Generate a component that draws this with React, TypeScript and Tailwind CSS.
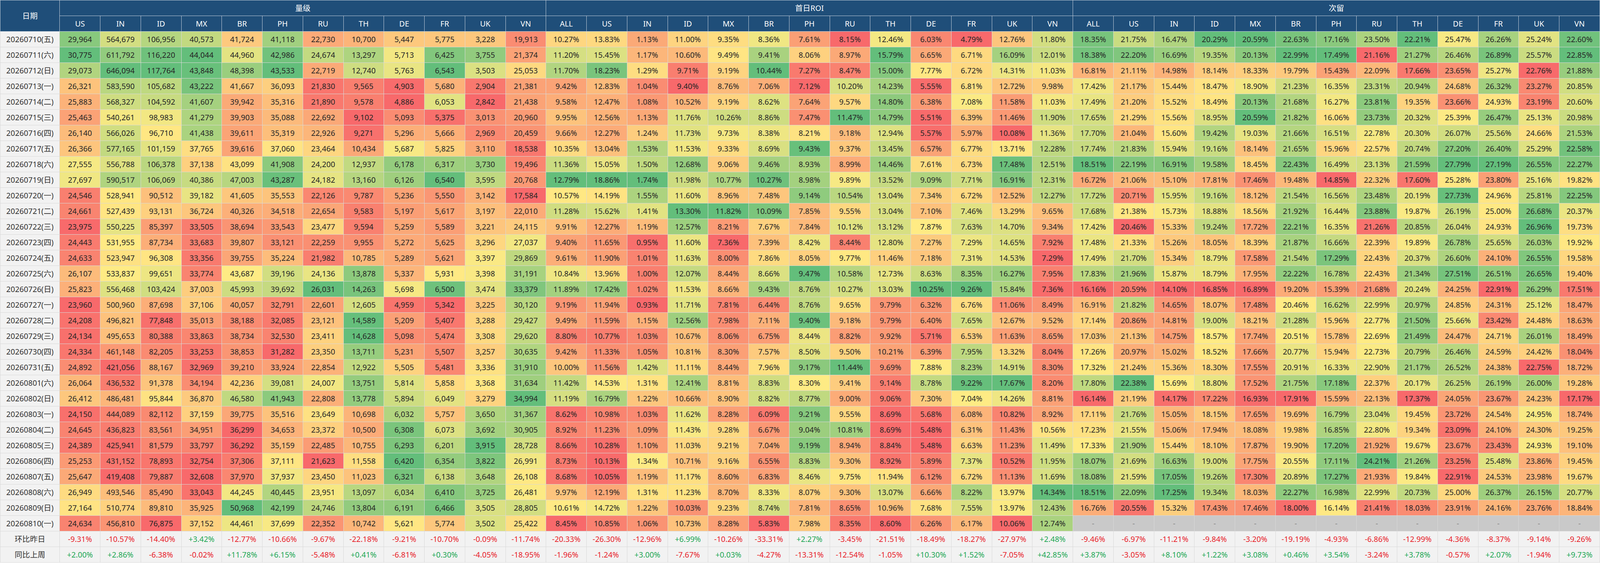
import React from "react";

const COUNTRIES = ["US", "IN", "ID", "MX", "BR", "PH", "RU", "TH", "DE", "FR", "UK", "VN"];
const COUNTRIES_ALL = ["ALL", ...COUNTRIES];

const VOLUME = `29,964 564,679 106,956 40,573 41,724 41,118 22,730 10,700 5,447 5,775 3,228 19,913
30,775 611,792 116,220 44,044 44,960 42,986 24,674 13,297 5,713 6,425 3,755 21,374
29,073 646,094 117,764 43,848 48,398 43,533 22,719 12,740 5,763 6,543 3,503 25,053
26,321 583,590 105,682 43,222 41,667 36,093 21,830 9,565 4,903 5,680 2,904 21,381
25,883 568,327 104,592 41,607 39,942 35,316 21,890 9,578 4,886 6,053 2,842 21,438
25,463 540,261 98,983 41,279 39,903 35,088 22,692 9,102 5,093 5,375 3,013 20,960
26,140 566,026 96,710 41,438 39,611 35,319 22,926 9,271 5,296 5,666 2,969 20,459
26,366 577,165 101,159 37,765 39,616 37,060 23,464 10,434 5,687 5,825 3,110 18,538
27,555 556,788 106,378 37,138 43,099 41,908 24,200 12,937 6,178 6,317 3,730 19,496
27,697 590,517 106,069 40,386 47,003 43,287 24,182 13,160 6,126 6,540 3,595 20,768
24,546 528,941 90,512 39,182 41,605 35,553 22,126 9,787 5,236 5,550 3,142 17,584
24,661 527,439 93,131 36,724 40,326 34,518 22,654 9,583 5,197 5,617 3,197 22,010
23,975 550,225 85,397 33,505 38,694 33,543 23,477 9,594 5,259 5,589 3,221 24,115
24,443 531,955 87,734 33,683 39,807 33,121 22,259 9,955 5,272 5,625 3,296 27,037
24,633 523,947 96,308 33,356 39,755 35,224 21,982 10,785 5,289 5,621 3,397 29,869
26,107 533,837 99,651 33,774 43,687 39,196 24,136 13,878 5,337 5,931 3,398 31,191
25,823 556,468 103,424 37,003 45,993 39,692 26,031 14,263 5,698 6,500 3,474 33,379
23,960 500,960 87,698 37,106 40,057 32,791 22,601 12,605 4,959 5,342 3,225 30,120
24,208 496,821 77,848 35,013 38,188 32,085 23,121 14,589 5,209 5,407 3,288 29,427
24,134 495,653 80,388 33,863 38,734 32,530 23,411 14,628 5,098 5,474 3,308 29,620
24,334 461,148 82,205 33,253 38,853 31,282 23,350 13,711 5,231 5,507 3,257 30,635
24,892 421,056 88,167 32,969 39,210 33,924 22,854 12,922 5,505 5,481 3,336 31,910
26,064 436,532 91,378 34,194 42,236 39,081 24,007 13,751 5,814 5,858 3,368 31,634
26,412 486,481 95,844 36,870 46,580 41,943 22,808 13,778 5,894 6,049 3,279 34,994
24,150 444,089 82,112 37,159 39,775 35,516 23,649 10,698 6,032 5,757 3,650 31,367
24,645 436,823 83,561 34,951 36,299 34,653 23,372 10,500 6,308 6,073 3,692 30,905
24,389 425,941 81,579 33,797 36,292 35,159 22,485 10,755 6,293 6,201 3,915 28,728
25,253 431,152 78,893 32,754 37,306 37,111 21,623 11,558 6,420 6,354 3,822 26,991
25,647 419,408 79,887 32,608 37,970 37,937 23,450 11,023 6,321 6,138 3,648 26,108
26,949 493,546 85,490 33,043 44,245 40,445 23,951 13,097 6,034 6,410 3,725 26,481
27,164 510,774 89,810 35,925 50,968 42,199 24,746 13,804 6,191 6,466 3,505 28,805
24,634 456,810 76,875 37,152 44,461 37,699 22,352 10,742 5,621 5,774 3,502 25,422`;

const ROI = `10.27% 13.83% 1.13% 11.00% 9.35% 8.36% 7.61% 8.15% 12.46% 6.03% 4.79% 12.76% 11.80%
11.20% 15.45% 1.17% 10.60% 9.49% 9.41% 8.06% 8.97% 15.79% 6.65% 6.71% 16.09% 12.01%
11.70% 18.23% 1.29% 9.71% 9.19% 10.44% 7.27% 8.47% 15.00% 7.77% 6.72% 14.31% 11.03%
9.42% 12.83% 1.04% 9.40% 8.76% 7.06% 7.12% 10.20% 14.23% 5.55% 6.81% 12.72% 9.98%
9.58% 12.47% 1.08% 10.52% 9.19% 8.62% 7.64% 9.57% 14.80% 6.38% 7.08% 11.58% 11.03%
9.95% 12.56% 1.13% 11.76% 10.26% 8.86% 7.47% 11.47% 14.79% 5.51% 6.39% 11.46% 11.90%
9.66% 12.27% 1.24% 11.73% 9.73% 8.38% 8.21% 9.18% 12.94% 5.57% 5.97% 10.08% 11.36%
10.35% 13.04% 1.53% 11.53% 9.33% 8.69% 9.43% 9.37% 13.45% 6.57% 6.77% 13.71% 12.28%
11.36% 15.05% 1.50% 12.68% 9.06% 9.46% 8.93% 8.99% 14.46% 7.61% 6.73% 17.48% 12.51%
12.79% 18.86% 1.74% 11.98% 10.77% 10.27% 8.98% 9.89% 13.52% 9.09% 7.71% 16.91% 12.31%
10.57% 14.19% 1.55% 11.60% 8.96% 7.48% 9.14% 10.54% 13.04% 7.34% 6.72% 12.52% 12.27%
11.28% 15.62% 1.41% 13.30% 11.82% 10.09% 7.85% 9.55% 13.04% 7.10% 7.46% 13.29% 9.65%
9.91% 12.27% 1.19% 12.57% 8.21% 7.67% 7.84% 10.12% 13.12% 7.87% 7.63% 14.70% 9.34%
9.40% 11.65% 0.95% 11.60% 7.36% 7.39% 8.42% 8.44% 12.80% 7.27% 7.29% 14.65% 7.92%
9.61% 11.90% 1.01% 11.63% 8.00% 7.86% 8.05% 9.77% 11.46% 7.18% 7.31% 14.53% 7.29%
10.84% 13.96% 1.00% 12.07% 8.44% 8.66% 9.47% 10.58% 12.73% 8.63% 8.35% 16.27% 7.95%
11.89% 17.42% 1.02% 11.53% 8.66% 9.43% 8.76% 10.27% 13.03% 10.25% 9.26% 15.84% 7.36%
9.19% 11.94% 0.93% 11.71% 7.81% 6.44% 8.76% 9.65% 9.79% 6.32% 6.76% 11.06% 8.49%
9.49% 11.59% 1.15% 12.56% 7.98% 7.11% 9.40% 9.18% 9.79% 6.40% 7.65% 12.67% 9.52%
8.80% 10.77% 1.03% 10.67% 8.06% 6.75% 8.44% 8.82% 9.92% 5.71% 6.53% 11.63% 8.65%
9.42% 11.33% 1.05% 10.81% 8.30% 7.57% 8.50% 9.50% 10.21% 6.39% 7.95% 13.32% 8.04%
10.00% 11.56% 1.42% 11.11% 8.44% 7.96% 9.17% 11.44% 9.69% 7.88% 8.23% 14.91% 8.30%
11.42% 14.53% 1.31% 12.41% 8.81% 8.83% 8.30% 9.41% 9.14% 8.78% 9.22% 17.67% 8.20%
11.19% 16.79% 1.22% 10.66% 8.90% 8.82% 8.77% 9.00% 9.06% 7.30% 7.04% 14.26% 8.81%
8.62% 10.98% 1.03% 11.62% 8.28% 6.09% 9.21% 9.55% 8.69% 5.68% 6.08% 10.82% 8.92%
8.92% 11.23% 1.09% 11.43% 9.28% 6.67% 9.04% 10.81% 8.69% 5.48% 6.31% 11.43% 10.56%
8.66% 10.28% 1.10% 11.03% 9.21% 7.04% 9.19% 8.94% 8.84% 5.48% 6.63% 11.23% 11.49%
8.73% 10.13% 1.34% 10.71% 9.16% 6.55% 8.83% 9.30% 8.92% 5.89% 7.37% 10.52% 11.95%
8.68% 10.05% 1.19% 11.17% 8.60% 6.83% 8.46% 9.75% 11.94% 6.12% 6.72% 11.13% 11.69%
9.97% 12.19% 1.31% 11.23% 8.70% 8.33% 8.07% 9.30% 13.07% 6.66% 8.22% 13.97% 14.34%
10.61% 14.72% 1.22% 10.03% 9.23% 8.74% 7.81% 8.65% 10.96% 7.68% 7.55% 13.97% 12.43%
8.45% 10.85% 1.06% 10.73% 8.28% 5.83% 7.98% 8.35% 8.60% 6.26% 6.17% 10.06% 12.74%`;

const RET = `18.35% 21.75% 16.47% 20.29% 20.59% 22.63% 17.16% 23.50% 22.21% 25.47% 26.26% 25.24% 22.60%
18.38% 22.20% 16.69% 19.35% 20.13% 22.99% 17.49% 21.16% 21.27% 26.46% 26.89% 25.57% 22.85%
16.81% 21.11% 14.98% 18.14% 18.33% 19.79% 15.43% 22.09% 17.66% 23.65% 25.27% 22.76% 21.88%
17.42% 21.17% 15.44% 18.47% 18.90% 21.23% 16.35% 23.31% 20.94% 24.68% 26.32% 23.27% 20.85%
17.49% 21.20% 15.52% 18.49% 20.13% 21.68% 16.27% 23.81% 19.35% 23.66% 24.93% 23.19% 20.60%
17.65% 21.29% 15.56% 18.95% 20.59% 21.82% 16.06% 23.73% 20.32% 25.39% 26.47% 25.13% 20.98%
17.70% 21.04% 15.60% 19.42% 19.03% 21.66% 16.51% 22.78% 20.30% 26.07% 25.56% 24.66% 21.53%
17.74% 21.83% 15.94% 19.16% 18.14% 21.65% 15.96% 22.57% 20.74% 27.20% 26.40% 25.29% 22.58%
18.51% 22.19% 16.91% 19.58% 18.45% 22.43% 16.49% 23.13% 21.59% 27.79% 27.19% 26.55% 22.27%
16.72% 21.06% 15.10% 17.81% 17.46% 19.48% 14.85% 22.32% 17.60% 25.28% 23.80% 25.16% 19.82%
17.72% 20.71% 15.95% 19.16% 18.12% 21.54% 16.56% 23.48% 20.19% 27.73% 24.96% 25.81% 22.25%
17.68% 21.38% 15.73% 18.88% 18.56% 21.92% 16.44% 23.88% 19.87% 26.19% 25.00% 26.68% 20.37%
17.42% 20.46% 15.33% 19.24% 17.72% 22.21% 16.35% 21.26% 20.85% 26.04% 24.93% 26.96% 19.73%
17.48% 21.33% 15.26% 18.05% 18.39% 21.87% 16.66% 22.39% 19.89% 26.78% 25.65% 26.03% 19.92%
17.49% 21.70% 15.34% 18.79% 17.58% 21.54% 17.29% 22.43% 20.37% 26.60% 24.10% 26.55% 19.58%
17.83% 21.96% 15.87% 18.79% 17.95% 22.22% 16.78% 22.43% 21.34% 27.51% 26.51% 26.65% 19.40%
16.16% 20.59% 14.10% 16.85% 16.89% 19.20% 15.39% 21.68% 20.24% 24.25% 22.91% 26.29% 17.51%
16.91% 21.82% 14.65% 18.07% 17.48% 20.46% 16.62% 22.99% 20.97% 24.85% 24.31% 25.12% 18.47%
17.14% 20.86% 14.81% 19.00% 18.21% 21.28% 15.96% 22.77% 21.50% 25.66% 23.42% 24.48% 18.63%
17.03% 21.13% 14.75% 18.57% 17.74% 20.51% 15.78% 22.69% 21.49% 24.47% 24.71% 26.01% 18.49%
17.26% 20.97% 15.02% 18.52% 17.66% 20.77% 15.94% 22.73% 20.79% 26.46% 24.59% 24.42% 18.04%
17.32% 21.24% 15.36% 18.30% 17.55% 20.91% 16.33% 22.90% 21.17% 26.52% 24.38% 22.75% 18.72%
17.80% 22.38% 15.69% 18.80% 17.52% 21.75% 17.18% 22.37% 20.17% 26.25% 26.19% 26.00% 19.28%
16.14% 21.19% 14.17% 17.22% 16.93% 17.91% 15.59% 22.13% 17.37% 24.05% 23.67% 24.23% 17.17%
17.11% 21.76% 15.05% 18.15% 17.65% 19.69% 16.79% 23.04% 19.45% 23.72% 24.54% 24.95% 18.74%
17.23% 21.55% 15.06% 17.94% 18.08% 19.98% 16.85% 22.80% 19.34% 23.09% 24.10% 24.30% 19.25%
17.33% 21.90% 15.44% 18.10% 17.87% 19.90% 17.20% 21.92% 19.67% 23.67% 23.43% 24.93% 19.10%
18.07% 21.69% 16.63% 19.00% 17.75% 20.55% 17.11% 24.21% 21.26% 23.25% 25.48% 23.86% 19.45%
18.08% 21.59% 17.05% 19.26% 17.30% 20.89% 17.27% 21.93% 19.84% 22.91% 24.53% 23.98% 19.67%
18.51% 22.09% 17.25% 19.34% 18.03% 22.27% 16.98% 22.99% 20.73% 25.00% 26.37% 26.15% 20.77%
16.76% 20.55% 15.32% 17.43% 17.46% 18.00% 16.14% 21.41% 18.03% 23.91% 24.16% 23.76% 18.84%
- - - - - - - - - - - - -`;

const DOD = {
  vol: "-9.31% -10.57% -14.40% +3.42% -12.77% -10.66% -9.67% -22.18% -9.21% -10.70% -0.09% -11.74%",
  roi: "-20.33% -26.30% -12.96% +6.99% -10.26% -33.31% +2.27% -3.45% -21.51% -18.49% -18.27% -27.97% +2.48%",
  ret: "-9.46% -6.97% -11.21% -9.84% -3.20% -19.19% -4.93% -6.86% -12.99% -4.36% -8.37% -9.14% -9.26%",
};
const WOW = {
  vol: "+2.00% +2.86% -6.38% -0.02% +11.78% +6.15% -5.48% +0.41% -6.81% +0.30% -4.05% -18.95%",
  roi: "-1.96% -1.24% +3.00% -7.67% +0.03% -4.27% -13.31% -12.54% -1.05% +10.30% +1.52% -7.05% +42.85%",
  ret: "+3.87% -3.05% +8.10% +1.22% +3.08% +0.46% +3.54% -3.24% +3.78% -0.57% +2.07% -1.94% +9.73%",
};

const parse = (s: string) => s.trim().split("\n").map((l) => l.trim().split(/\s+/));
const volRows = parse(VOLUME);
const roiRows = parse(ROI);
const retRows = parse(RET);

const WD = ["五", "六", "日", "一", "二", "三", "四"];
const dates = Array.from({ length: 32 }, (_, i) => {
  const d = 10 + i;
  const m = d > 31 ? "08" : "07";
  const day = d > 31 ? d - 31 : d;
  return `2026${m}${String(day).padStart(2, "0")}(${WD[i % 7]})`;
});

const num = (s: string) => parseFloat(s.replace(/[,%]/g, ""));

function colStats(rows: string[][]) {
  const n = rows[0].length;
  return Array.from({ length: n }, (_, c) => {
    const vals = rows.map((r) => num(r[c])).filter((v) => !isNaN(v));
    return { min: Math.min(...vals), max: Math.max(...vals) };
  });
}

const RED = [248, 105, 107];
const YEL = [255, 235, 132];
const GRN = [99, 190, 123];
const lerp = (a: number[], b: number[], t: number) =>
  `rgb(${a.map((x, i) => Math.round(x + (b[i] - x) * t)).join(",")})`;

function heat(v: number, st: { min: number; max: number }) {
  if (isNaN(v)) return "#c9c9c9";
  const mid = (st.min + st.max) / 2;
  if (v <= mid) return lerp(RED, YEL, mid === st.min ? 1 : (v - st.min) / (mid - st.min));
  return lerp(YEL, GRN, (v - mid) / (st.max - mid));
}

const volStats = colStats(volRows);
const roiStats = colStats(roiRows);
const retStats = colStats(retRows);

const cell = "border border-[#d9d9d9] text-center whitespace-nowrap overflow-hidden p-0";

function DataCells({ row, stats }: { row: string[]; stats: { min: number; max: number }[] }) {
  return (
    <>
      {row.map((v, c) => {
        const n = num(v);
        const empty = isNaN(n);
        return (
          <td
            key={c}
            className={`${cell} ${empty ? "text-[#8a8a8a]" : "text-[#262626]"}`}
            style={{ backgroundColor: heat(n, stats[c]) }}
          >
            {v}
          </td>
        );
      })}
    </>
  );
}

function DiffCells({ s }: { s: string }) {
  return (
    <>
      {s.split(" ").map((v, c) => (
        <td
          key={c}
          className={`${cell} bg-[#f2f2f2] ${v.startsWith("-") ? "text-[#e8232b]" : "text-[#1fa856]"}`}
        >
          {v}
        </td>
      ))}
    </>
  );
}

export default function App() {
  const th = "border border-[#c3cedb] bg-[#1f4e79] text-white font-normal text-center whitespace-nowrap overflow-hidden p-0";
  const dateCell = "border border-[#d9d9d9] bg-[#f2f2f2] text-[#333] text-center whitespace-nowrap overflow-hidden p-0";
  return (
    <div className="w-full h-[1442px] overflow-hidden bg-white font-['Noto_Sans','Noto_Sans_CJK_SC',sans-serif] text-[0.479vw] leading-none">
      <table className="table-fixed border-collapse w-full">
        <colgroup>
          <col className="w-[3.72%]" />
          {Array.from({ length: 38 }, (_, i) => (
            <col key={i} />
          ))}
        </colgroup>
        <thead>
          <tr className="h-[40px]">
            <th rowSpan={2} className={th}>
              日期
            </th>
            <th colSpan={12} className={th}>
              量级
            </th>
            <th colSpan={13} className={th}>
              首日ROI
            </th>
            <th colSpan={13} className={th}>
              次留
            </th>
          </tr>
          <tr className="h-[40px]">
            {COUNTRIES.map((c) => (
              <th key={"v" + c} className={th}>
                {c}
              </th>
            ))}
            {COUNTRIES_ALL.map((c) => (
              <th key={"r" + c} className={th}>
                {c}
              </th>
            ))}
            {COUNTRIES_ALL.map((c) => (
              <th key={"t" + c} className={th}>
                {c}
              </th>
            ))}
          </tr>
        </thead>
        <tbody>
          {dates.map((d, i) => (
            <tr key={d} className="h-[40px]">
              <td className={dateCell}>{d}</td>
              <DataCells row={volRows[i]} stats={volStats} />
              <DataCells row={roiRows[i]} stats={roiStats} />
              <DataCells row={retRows[i]} stats={retStats} />
            </tr>
          ))}
          <tr className="h-[40px]">
            <td className={dateCell}>环比昨日</td>
            <DiffCells s={DOD.vol} />
            <DiffCells s={DOD.roi} />
            <DiffCells s={DOD.ret} />
          </tr>
          <tr className="h-[40px]">
            <td className={dateCell}>同比上周</td>
            <DiffCells s={WOW.vol} />
            <DiffCells s={WOW.roi} />
            <DiffCells s={WOW.ret} />
          </tr>
        </tbody>
      </table>
    </div>
  );
}
